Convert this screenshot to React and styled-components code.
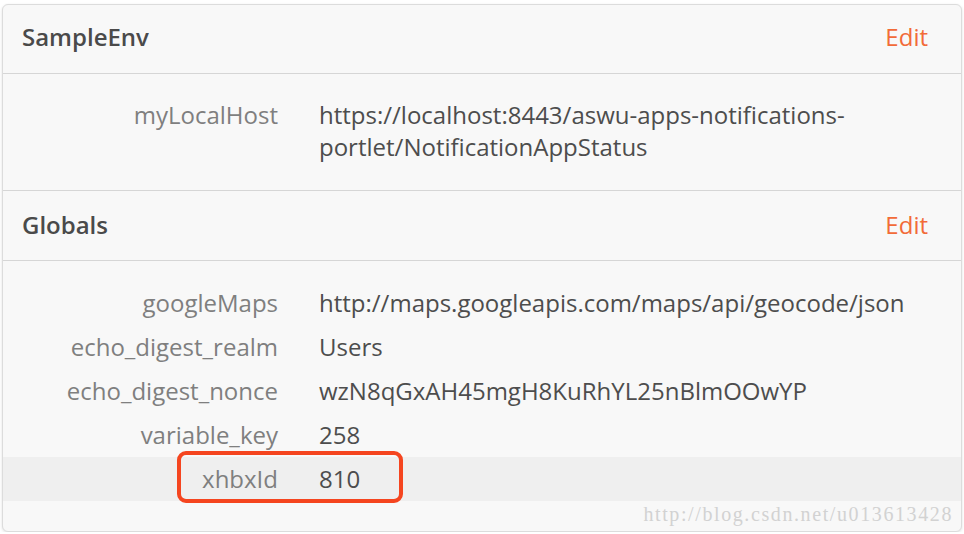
import styled, { createGlobalStyle } from "styled-components";

const GlobalStyle = createGlobalStyle`
  html, body {
    margin: 0;
    padding: 0;
    background: #ffffff;
  }
  body {
    font-family: "Open Sans", "Liberation Sans", sans-serif;
  }
`

const environments = [
  {
    name: "SampleEnv",
    values: [
      { key: "myLocalHost", value: "https://localhost:8443/aswu-apps-notifications-portlet/NotificationAppStatus" },
    ],
  },
  {
    name: "Globals",
    values: [
      { key: "googleMaps", value: "http://maps.googleapis.com/maps/api/geocode/json" },
      { key: "echo_digest_realm", value: "Users" },
      { key: "echo_digest_nonce", value: "wzN8qGxAH45mgH8KuRhYL25nBlmOOwYP" },
      { key: "variable_key", value: "258" },
      { key: "xhbxId", value: "810", marked: true },
    ],
  },
]

function App() {
  return (
    <Page>
      <GlobalStyle />
      <Panel>
        {environments.map((env, i) => (
          <Section key={env.name}>
            <Header $first={i === 0}>
              <Title>{env.name}</Title>
              <EditLink>Edit</EditLink>
            </Header>
            <Body $last={i === environments.length - 1}>
              {env.values.map(item => (
                <Row key={item.key} $marked={item.marked}>
                  <Label>{item.key}</Label>
                  <Value>{item.value}</Value>
                  {item.marked && <Marker />}
                </Row>
              ))}
            </Body>
          </Section>
        ))}
        <Watermark>http://blog.csdn.net/u013613428</Watermark>
      </Panel>
    </Page>
  )
}

const Page = styled.div`
  padding: 4px 2px 0 2px;
`

const Panel = styled.div`
  position: relative;
  box-sizing: border-box;
  width: 960px;
  height: 528px;
  background: #f8f8f8;
  border: 1px solid #dcdcdc;
  border-radius: 6px;
  box-shadow: 0 1px 3px rgba(0, 0, 0, 0.12);
  overflow: hidden;
`

const Section = styled.div`
  display: flex;
  flex-direction: column;
`

const Header = styled.div`
  display: flex;
  align-items: center;
  justify-content: space-between;
  height: ${p => (p.$first ? "69px" : "70px")};
  padding: ${p => (p.$first ? "0 33px 5px 19px" : "0 33px 2px 19px")};
  border-bottom: 1px solid #d6d6d6;
  box-sizing: border-box;
`

const Title = styled.div`
  font-size: 24px;
  font-weight: 600;
  color: #4a4a4a;
`

const EditLink = styled.a`
  font-size: 24px;
  color: #f26b38;
  cursor: pointer;
`

const Body = styled.div`
  display: flex;
  flex-direction: column;
  padding: ${p => (p.$last ? "20px 0 0" : "19px 0 21px")};
  border-bottom: ${p => (p.$last ? "none" : "1px solid #d6d6d6")};
`

const Row = styled.div`
  position: relative;
  display: grid;
  grid-template-columns: 275px 620px;
  column-gap: 41px;
  align-items: start;
  padding: 6px 0;
  background: ${p => (p.$marked ? "#efefef" : "transparent")};
  font-size: 24px;
  line-height: 32px;
`

const Label = styled.div`
  text-align: right;
  color: #7f7f7f;
`

const Value = styled.div`
  color: #4d4d4d;
`

const Marker = styled.div`
  position: absolute;
  left: 174px;
  top: -6px;
  width: 226px;
  height: 52px;
  box-sizing: border-box;
  border: 4px solid #f5451f;
  border-radius: 9px;
`

const Watermark = styled.div`
  position: absolute;
  right: 8px;
  bottom: 5px;
  font-family: "Liberation Serif", serif;
  font-size: 20px;
  letter-spacing: 1.6px;
  color: #d2d2d2;
`

export default App
